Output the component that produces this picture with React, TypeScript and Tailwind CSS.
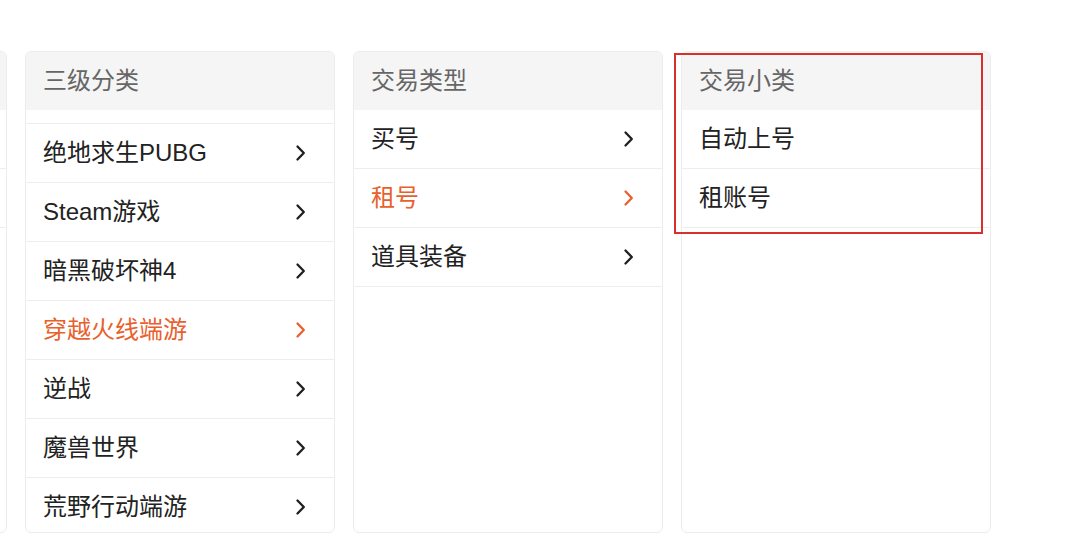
import React from "react";

const FONT = { fontFamily: '"Liberation Sans", "Noto Sans CJK SC", sans-serif' };

function Chevron({ active }: { active?: boolean }) {
  return (
    <svg width="12" height="18" viewBox="0 0 12 18" className={active ? "text-[#e8602c]" : "text-[#1f1f1f]"}>
      <polyline points="2.5,2.5 8.8,9 2.5,15.5" fill="none" stroke="currentColor" strokeWidth="2.3" strokeLinecap="round" strokeLinejoin="round" />
    </svg>
  );
}

type Item = { label: string; active?: boolean; arrow?: boolean };

function Panel({ title, items, scrolled }: { title: string; items: Item[]; scrolled?: boolean }) {
  return (
    <div className="w-[310px] h-[482px] shrink-0 border border-[#ececec] rounded-[6px] overflow-hidden flex flex-col bg-white">
      <div className="h-[58px] shrink-0 bg-[#f5f5f5] flex items-center pl-[17px] text-[24px] text-[#666666]">{title}</div>
      <div className="flex-1 overflow-hidden">
        {scrolled && <div className="h-[14px] border-b border-[#ededed]" />}
        {items.map((it, i) => (
          <div
            key={i}
            className="h-[59px] border-b border-[#ededed] flex items-center justify-between pl-[17px] pr-[27px] text-[24px]"
          >
            <span className={it.active ? "text-[#e8602c]" : "text-[#222222]"}>{it.label}</span>
            {it.arrow !== false && <Chevron active={it.active} />}
          </div>
        ))}
      </div>
    </div>
  );
}

export default function App() {
  return (
    <div className="relative w-[1080px] h-[555px] overflow-hidden bg-white" style={FONT}>
      <div className="flex gap-[18px] pt-[51px] -ml-[303px]">
        <Panel title="" items={[{ label: "", arrow: false }, { label: "", arrow: false }]} />
        <Panel
          title="三级分类"
          scrolled
          items={[
            { label: "绝地求生PUBG" },
            { label: "Steam游戏" },
            { label: "暗黑破坏神4" },
            { label: "穿越火线端游", active: true },
            { label: "逆战" },
            { label: "魔兽世界" },
            { label: "荒野行动端游" },
          ]}
        />
        <Panel
          title="交易类型"
          items={[
            { label: "买号" },
            { label: "租号", active: true },
            { label: "道具装备" },
          ]}
        />
        <Panel
          title="交易小类"
          items={[
            { label: "自动上号", arrow: false },
            { label: "租账号", arrow: false },
          ]}
        />
      </div>
      <div className="absolute left-[674px] top-[53px] w-[309px] h-[181px] border-2 border-[#d8302c] pointer-events-none" />
    </div>
  );
}
